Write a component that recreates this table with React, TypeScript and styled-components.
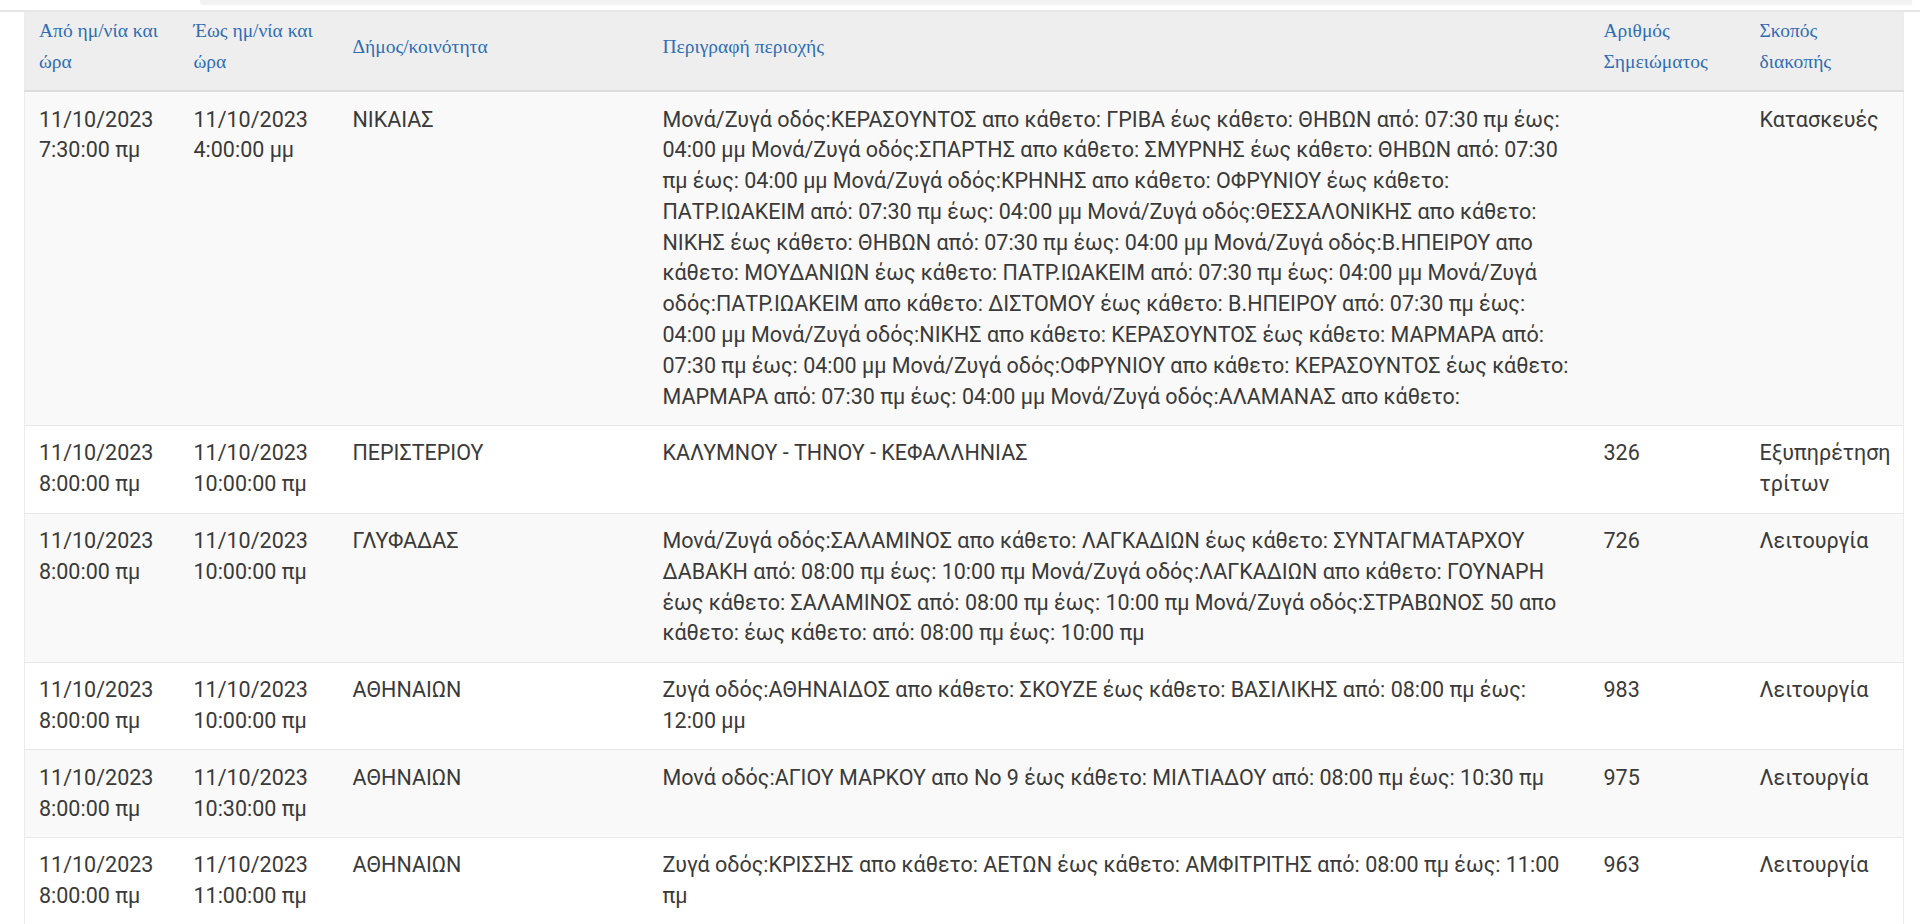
import styled, { createGlobalStyle } from 'styled-components';

const GlobalStyle = createGlobalStyle`
  html, body {
    margin: 0;
    padding: 0;
    background: #ffffff;
    overflow: hidden;
  }
`;

const Page = styled.div`
  width: 1920px;
  height: 924px;
  overflow: hidden;
`;

const TopStrip = styled.div`
  height: 4px;
  margin: 0 8px 0 200px;
  background: #f2f2f2;
  border-bottom-left-radius: 10px;
  box-shadow: 0 1px 2px rgba(0, 0, 0, 0.06);
`;

const Content = styled.div`
  margin-top: 6px;
  border-top: 2px solid #e6e6e6;
  padding: 0 17px 0 24px;
`;

const Table = styled.table`
  width: 100%;
  border-collapse: collapse;
  table-layout: fixed;
  border-left: 1px solid #ececec;
  border-right: 1px solid #ececec;
  font-family: Roboto, 'Liberation Sans', sans-serif;
`;

const HeadCell = styled.th`
  background: #eeeeee;
  color: #2f6db5;
  font-family: 'Liberation Serif', 'DejaVu Serif', serif;
  font-weight: normal;
  font-size: 19.5px;
  line-height: 31px;
  text-align: left;
  vertical-align: middle;
  padding: 3px 14px 13px;
  border-bottom: 2px solid #dddddd;
`;

const Row = styled.tr<{ $striped: boolean }>`
  background: ${({ $striped }) => ($striped ? '#f9f9f9' : '#ffffff')};
  border-top: 1px solid #e8e8e8;
`;

const Cell = styled.td`
  color: #3a3a3a;
  font-size: 21.5px;
  line-height: 30.8px;
  vertical-align: top;
  padding: 12.5px 14px;
`;

const Line = styled.span`
  display: block;
  white-space: nowrap;
`;

const columns = [
  { title: 'Από ημ/νία και ώρα', width: 155 },
  { title: 'Έως ημ/νία και ώρα', width: 159 },
  { title: 'Δήμος/κοινότητα', width: 310 },
  { title: 'Περιγραφή περιοχής', width: 941 },
  { title: 'Αριθμός Σημειώματος', width: 156 },
  { title: 'Σκοπός διακοπής', width: 158 },
];

const rows = [
  {
    from: '11/10/2023 7:30:00 πμ',
    to: '11/10/2023 4:00:00 μμ',
    area: 'ΝΙΚΑΙΑΣ',
    desc: [
      'Μονά/Ζυγά οδός:ΚΕΡΑΣΟΥΝΤΟΣ απο κάθετο: ΓΡΙΒΑ έως κάθετο: ΘΗΒΩΝ από: 07:30 πμ έως:',
      '04:00 μμ Μονά/Ζυγά οδός:ΣΠΑΡΤΗΣ απο κάθετο: ΣΜΥΡΝΗΣ έως κάθετο: ΘΗΒΩΝ από: 07:30',
      'πμ έως: 04:00 μμ Μονά/Ζυγά οδός:ΚΡΗΝΗΣ απο κάθετο: ΟΦΡΥΝΙΟΥ έως κάθετο:',
      'ΠΑΤΡ.ΙΩΑΚΕΙΜ από: 07:30 πμ έως: 04:00 μμ Μονά/Ζυγά οδός:ΘΕΣΣΑΛΟΝΙΚΗΣ απο κάθετο:',
      'ΝΙΚΗΣ έως κάθετο: ΘΗΒΩΝ από: 07:30 πμ έως: 04:00 μμ Μονά/Ζυγά οδός:Β.ΗΠΕΙΡΟΥ απο',
      'κάθετο: ΜΟΥΔΑΝΙΩΝ έως κάθετο: ΠΑΤΡ.ΙΩΑΚΕΙΜ από: 07:30 πμ έως: 04:00 μμ Μονά/Ζυγά',
      'οδός:ΠΑΤΡ.ΙΩΑΚΕΙΜ απο κάθετο: ΔΙΣΤΟΜΟΥ έως κάθετο: Β.ΗΠΕΙΡΟΥ από: 07:30 πμ έως:',
      '04:00 μμ Μονά/Ζυγά οδός:ΝΙΚΗΣ απο κάθετο: ΚΕΡΑΣΟΥΝΤΟΣ έως κάθετο: ΜΑΡΜΑΡΑ από:',
      '07:30 πμ έως: 04:00 μμ Μονά/Ζυγά οδός:ΟΦΡΥΝΙΟΥ απο κάθετο: ΚΕΡΑΣΟΥΝΤΟΣ έως κάθετο:',
      'ΜΑΡΜΑΡΑ από: 07:30 πμ έως: 04:00 μμ Μονά/Ζυγά οδός:ΑΛΑΜΑΝΑΣ απο κάθετο:',
    ],
    note: '',
    reason: 'Κατασκευές',
  },
  {
    from: '11/10/2023 8:00:00 πμ',
    to: '11/10/2023 10:00:00 πμ',
    area: 'ΠΕΡΙΣΤΕΡΙΟΥ',
    desc: ['ΚΑΛΥΜΝΟΥ - ΤΗΝΟΥ - ΚΕΦΑΛΛΗΝΙΑΣ'],
    note: '326',
    reason: 'Εξυπηρέτηση τρίτων',
  },
  {
    from: '11/10/2023 8:00:00 πμ',
    to: '11/10/2023 10:00:00 πμ',
    area: 'ΓΛΥΦΑΔΑΣ',
    desc: [
      'Μονά/Ζυγά οδός:ΣΑΛΑΜΙΝΟΣ απο κάθετο: ΛΑΓΚΑΔΙΩΝ έως κάθετο: ΣΥΝΤΑΓΜΑΤΑΡΧΟΥ',
      'ΔΑΒΑΚΗ από: 08:00 πμ έως: 10:00 πμ Μονά/Ζυγά οδός:ΛΑΓΚΑΔΙΩΝ απο κάθετο: ΓΟΥΝΑΡΗ',
      'έως κάθετο: ΣΑΛΑΜΙΝΟΣ από: 08:00 πμ έως: 10:00 πμ Μονά/Ζυγά οδός:ΣΤΡΑΒΩΝΟΣ 50 απο',
      'κάθετο: έως κάθετο: από: 08:00 πμ έως: 10:00 πμ',
    ],
    note: '726',
    reason: 'Λειτουργία',
  },
  {
    from: '11/10/2023 8:00:00 πμ',
    to: '11/10/2023 10:00:00 πμ',
    area: 'ΑΘΗΝΑΙΩΝ',
    desc: [
      'Ζυγά οδός:ΑΘΗΝΑΙΔΟΣ απο κάθετο: ΣΚΟΥΖΕ έως κάθετο: ΒΑΣΙΛΙΚΗΣ από: 08:00 πμ έως:',
      '12:00 μμ',
    ],
    note: '983',
    reason: 'Λειτουργία',
  },
  {
    from: '11/10/2023 8:00:00 πμ',
    to: '11/10/2023 10:30:00 πμ',
    area: 'ΑΘΗΝΑΙΩΝ',
    desc: ['Μονά οδός:ΑΓΙΟΥ ΜΑΡΚΟΥ απο No 9 έως κάθετο: ΜΙΛΤΙΑΔΟΥ από: 08:00 πμ έως: 10:30 πμ'],
    note: '975',
    reason: 'Λειτουργία',
  },
  {
    from: '11/10/2023 8:00:00 πμ',
    to: '11/10/2023 11:00:00 πμ',
    area: 'ΑΘΗΝΑΙΩΝ',
    desc: ['Ζυγά οδός:ΚΡΙΣΣΗΣ απο κάθετο: ΑΕΤΩΝ έως κάθετο: ΑΜΦΙΤΡΙΤΗΣ από: 08:00 πμ έως: 11:00', 'πμ'],
    note: '963',
    reason: 'Λειτουργία',
  },
];

export default function App() {
  return (
    <>
      <GlobalStyle />
      <Page>
        <TopStrip />
        <Content>
          <Table>
            <colgroup>
              {columns.map((c) => (
                <col key={c.title} style={{ width: c.width }} />
              ))}
            </colgroup>
            <thead>
              <tr>
                {columns.map((c) => (
                  <HeadCell key={c.title}>{c.title}</HeadCell>
                ))}
              </tr>
            </thead>
            <tbody>
              {rows.map((r, i) => (
                <Row key={i} $striped={i % 2 === 0}>
                  <Cell>{r.from}</Cell>
                  <Cell>{r.to}</Cell>
                  <Cell>{r.area}</Cell>
                  <Cell>
                    {r.desc.map((line, j) => (
                      <Line key={j}>{line}</Line>
                    ))}
                  </Cell>
                  <Cell>{r.note}</Cell>
                  <Cell>{r.reason}</Cell>
                </Row>
              ))}
            </tbody>
          </Table>
        </Content>
      </Page>
    </>
  );
}
